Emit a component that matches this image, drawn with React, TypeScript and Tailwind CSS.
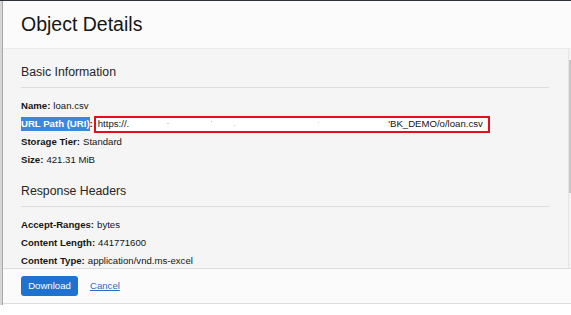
import React from 'react';

type Row = { label: string; value: string };

const basicRows: Row[] = [
  { label: 'Name', value: 'loan.csv' },
];

const moreBasic: Row[] = [
  { label: 'Storage Tier', value: 'Standard' },
  { label: 'Size', value: '421.31 MiB' },
];

const headerRows: Row[] = [
  { label: 'Accept-Ranges', value: 'bytes' },
  { label: 'Content Length', value: '441771600' },
  { label: 'Content Type', value: 'application/vnd.ms-excel' },
];

const DetailRow: React.FC<Row> = ({ label, value }) => (
  <div className="flex h-[18px] items-center whitespace-nowrap">
    <span className="font-bold">{label}:</span>
    <span className="ml-[3px]">{value}</span>
  </div>
);

const SectionTitle: React.FC<{ title: string }> = ({ title }) => (
  <div className="border-b border-[#dcdcdc] pb-[7px] text-[12.3px] leading-[16px] text-[#262626]">{title}</div>
);

const App: React.FC = () => {
  return (
    <div className="flex h-[315px] w-[571px] flex-col overflow-hidden bg-white font-['Liberation_Sans',Arial,sans-serif] text-[#161513]">
      <div className="h-px shrink-0 bg-[#2b303b]" />
      <div className="flex h-[304px] shrink-0">
        <div className="w-[2px] bg-[#d6d6d6]" />
        <div className="flex flex-1 flex-col border-l border-[#a9a9a9]">
          {/* header */}
          <div className="flex h-[48px] shrink-0 items-center border-b border-[#ececec] bg-[#fbfbfb] pl-[18px] pt-[1px]">
            <h1 className="text-[19.5px] leading-none">Object Details</h1>
          </div>

          {/* body */}
          <div className="flex h-[219px] shrink-0 bg-[#f5f5f5]">
            <div className="flex-1 overflow-hidden pl-[18px] pr-[19px] pt-[15px] text-[9.6px]">
              <SectionTitle title="Basic Information" />
              <div className="mt-[9px]">
                {basicRows.map((r) => (
                  <DetailRow key={r.label} {...r} />
                ))}
                <div className="flex h-[18px] items-center whitespace-nowrap">
                  <span className="bg-[#3b87dc] font-bold text-white">URL Path (URI)</span>
                  <span className="font-bold">:</span>
                  <div className="relative ml-[1px] flex h-[17px] w-[396px] items-center justify-between border-2 border-[#e3101b] bg-white pl-[2px] pr-[5px]">
                    <span>https://.</span>
                    <span className="absolute left-[18px] top-[6px] h-px w-px bg-[#c8c8c8]" />
                    <span className="absolute left-[71px] top-[5px] h-px w-[2px] bg-[#d0d0d0]" />
                    <span className="absolute left-[115px] top-[3px] h-px w-px bg-[#bdbdbd]" />
                    <span className="absolute left-[138px] top-[7px] h-px w-px bg-[#c8c8c8]" />
                    <span className="absolute left-[222px] top-[4px] h-px w-px bg-[#cccccc]" />
                    <span>'BK_DEMO/o/loan.csv</span>
                  </div>
                </div>
                {moreBasic.map((r) => (
                  <DetailRow key={r.label} {...r} />
                ))}
              </div>

              <div className="mt-[14px]">
                <SectionTitle title="Response Headers" />
              </div>
              <div className="mt-[9px]">
                {headerRows.map((r) => (
                  <DetailRow key={r.label} {...r} />
                ))}
              </div>
            </div>
            {/* scrollbar */}
            <div className="flex w-[3px] flex-col border-l border-[#e6e6e6] bg-[#f2f2f2] pt-[11px]">
              <div className="h-[133px] bg-[#c6c6c6]" />
            </div>
          </div>

          {/* footer */}
          <div className="flex h-[36px] shrink-0 items-center border-y border-[#dedede] bg-[#fbfbfb] pl-[18px] text-[9.6px]">
            <button className="h-[20px] w-[57px] rounded-[3px] bg-[#1f72cf] text-white">Download</button>
            <a href="#" className="ml-[12px] text-[#2c6cc0] underline">
              Cancel
            </a>
          </div>
        </div>
      </div>
    </div>
  );
};

export default App;
